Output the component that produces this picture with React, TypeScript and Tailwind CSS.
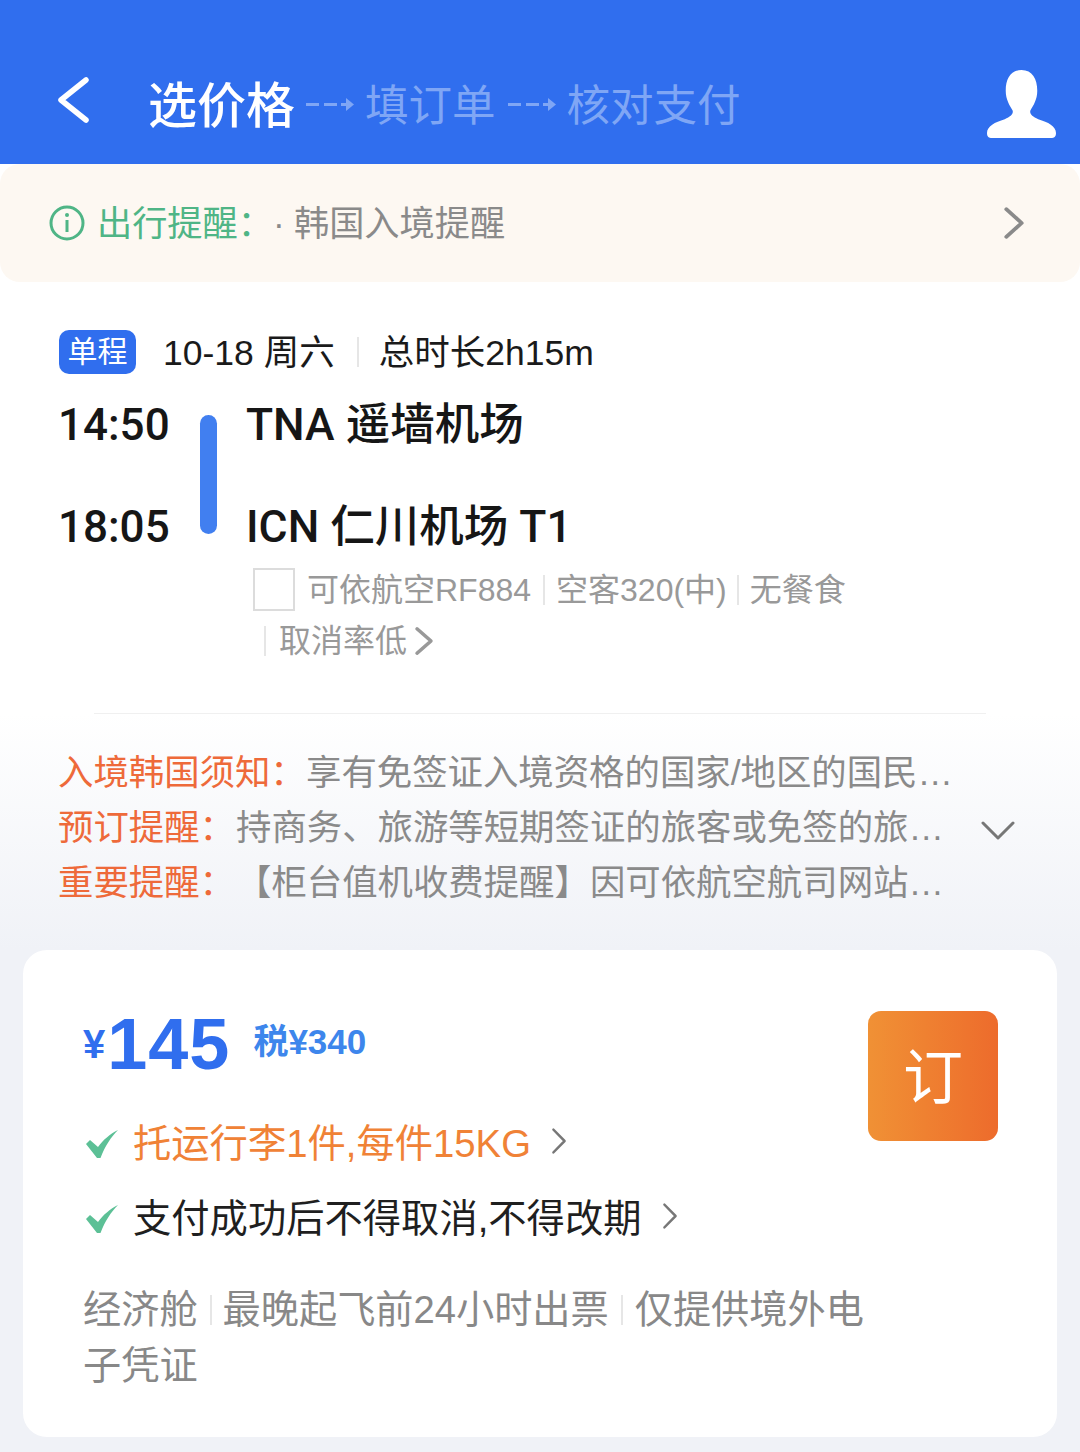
const Chevron = ({ className, width = 3 }: { className: string; width?: number }) => (
  <svg viewBox="0 0 20 32" className={className} fill="none" stroke="currentColor" strokeLinecap="round" strokeLinejoin="round" preserveAspectRatio="none">
    <path d="M3 3 L17 16 L3 29" strokeWidth={width} />
  </svg>
);

const DashArrow = () => (
  <svg viewBox="0 0 48 14" className="w-[48px] h-[14px] shrink-0 text-[#7fa6f5]" fill="currentColor">
    <rect x="0" y="6" width="13" height="3" />
    <rect x="18" y="6" width="13" height="3" />
    <rect x="35" y="6" width="5" height="3" />
    <path d="M40 1 L48 7.5 L40 14 Z" />
  </svg>
);

const Check = () => (
  <svg viewBox="0 0 32 28" className="w-[32px] h-[28px] shrink-0 text-[#5cc096]" fill="currentColor">
    <path d="M0 14 L4 10 L12 17 C17 10 24 4 32 0 C25 7 19 16 14.500 28 L11 28 Z" />
  </svg>
);

const Sep = ({ className }: { className: string }) => <span className={`inline-block w-[2px] bg-[#e6e6e6] shrink-0 ${className}`} />;

const NOTICES = [
  { label: '入境韩国须知：', text: '享有免签证入境资格的国家/地区的国民…', indent: 'w-[248px]' },
  { label: '预订提醒：', text: '持商务、旅游等短期签证的旅客或免签的旅…', indent: 'w-[178px]' },
  { label: '重要提醒：', text: '【柜台值机收费提醒】因可依航空航司网站…', indent: 'w-[178px]' },
];

export default function App() {
  return (
    <div className="w-[1080px] h-[1452px] overflow-hidden bg-white font-['Liberation_Sans','Noto_Sans_CJK_SC',sans-serif]">
      {/* header */}
      <div className="h-[164px] bg-[#306eee] flex items-center pl-[57px] pr-[24px] pt-[44px] relative">
        <svg viewBox="0 0 32 46" className="w-[32px] h-[46px] text-white shrink-0 -mt-[9px]" fill="none" stroke="currentColor" strokeLinecap="round" strokeLinejoin="round">
          <path d="M29 3 L4 23 L29 43" strokeWidth="5.500" />
        </svg>
        <span className="ml-[59px] text-[49px] leading-none font-medium text-white pt-[4px]">选价格</span>
        <span className="ml-[11px]"><DashArrow /></span>
        <span className="ml-[11px] text-[43.500px] leading-none text-[#7fa6f5] pt-[5px]">填订单</span>
        <span className="ml-[12px]"><DashArrow /></span>
        <span className="ml-[11px] text-[43.500px] leading-none text-[#7fa6f5] pt-[5px]">核对支付</span>
        <svg viewBox="0 0 70 70" className="w-[69px] h-[69px] ml-auto text-white mt-[1px]" fill="currentColor">
          <path d="M35 0 C46 0 51 9 51 21 C51 30 47 36 44 41 C43 45 46 47 52 50 C62 53 70 57 70 64 C70 68 68 69 65 69 L5 69 C2 69 0 68 0 64 C0 57 8 53 18 50 C24 47 27 45 26 41 C23 36 19 30 19 21 C19 9 24 0 35 0 Z" />
        </svg>
      </div>

      {/* travel notice */}
      <div className="h-[118px] bg-[#fdf8f2] rounded-[20px] flex items-center pl-[49px] pr-[55px]">
        <svg viewBox="0 0 36 36" className="w-[36px] h-[36px] shrink-0 text-[#4fb586]" fill="none" stroke="currentColor">
          <circle cx="18" cy="18" r="16" strokeWidth="3" />
          <path d="M18 15 V27" strokeWidth="3" />
          <circle cx="18" cy="10" r="2" fill="currentColor" stroke="none" />
        </svg>
        <span className="ml-[12px] pt-[2px] text-[35.200px] leading-none text-[#4fb586] w-[176px] shrink-0">出行提醒：</span>
        <span className="pt-[2px] text-[35.200px] leading-none text-[#8a8a8a] w-[21px] shrink-0">·</span>
        <span className="pt-[2px] text-[35.200px] leading-none text-[#8a8a8a]">韩国入境提醒</span>
        <Chevron className="w-[22px] h-[34px] ml-auto text-[#8a8a8a]" width={3.500} />
      </div>

      {/* flight */}
      <div className="h-[431px] pl-[59px] pt-[48px]">
        <div className="flex items-center h-[44px]">
          <span className="w-[77px] h-[44px] rounded-[10px] bg-[#306eee] text-white text-[30px] leading-none flex items-center justify-center">单程</span>
          <span className="ml-[27px] pt-[3px] text-[35.500px] leading-none text-[#1a1a1a]">10-18 周六</span>
          <Sep className="h-[30px] ml-[22px]" />
          <span className="ml-[20px] pt-[3px] text-[35.500px] leading-none text-[#1a1a1a]">总时长2h15m</span>
        </div>
        <div className="flex mt-[26px] h-[150px] font-['Roboto','Noto_Sans_CJK_SC',sans-serif]">
          <div className="w-[141px] shrink-0 flex flex-col text-[44px] leading-[50px] font-medium text-[#161616] -ml-[1px] mr-[1px]">
            <span>14:50</span>
            <span className="mt-[52px]">18:05</span>
          </div>
          <div className="w-[17px] h-[119px] mt-[15px] rounded-full bg-[#417ff0] shrink-0" />
          <div className="ml-[29px] flex flex-col text-[44.500px] leading-[50px] font-medium text-[#161616]">
            <span>TNA 遥墙机场</span>
            <span className="mt-[52px]">ICN 仁川机场 T1</span>
          </div>
        </div>
        <div className="ml-[194px] mt-[18px] text-[32px] leading-none text-[#999999]">
          <div className="flex items-center h-[43px]">
            <span className="w-[42px] h-[43px] border-2 border-[#dcdcdc] shrink-0" />
            <span className="ml-[12px]">可依航空RF884</span>
            <Sep className="h-[30px] ml-[12px]" />
            <span className="ml-[11px]">空客320(中)</span>
            <Sep className="h-[30px] ml-[10px]" />
            <span className="ml-[11px]">无餐食</span>
          </div>
          <div className="flex items-center h-[36px] mt-[12px] pl-[11px]">
            <Sep className="h-[30px]" />
            <span className="ml-[13px]">取消率低</span>
            <Chevron className="w-[20px] h-[30px] ml-[7px] text-[#999999]" width={3.500} />
          </div>
        </div>
      </div>

      {/* tips */}
      <div className="h-[237px] bg-gradient-to-b from-white to-[#f0f2f7] relative">
        <div className="mx-[94px] h-[1px] bg-[#f0f0f0]" />
        <div className="pl-[58px] pt-[42px] flex flex-col gap-[20px]">
          {NOTICES.map((n) => (
            <div key={n.label} className="flex items-center h-[35px] text-[35.400px] leading-none">
              <span className={`${n.indent} shrink-0 text-[#ee6a3a]`}>{n.label}</span>
              <span className="text-[#8a8a8a] whitespace-nowrap">{n.text}</span>
            </div>
          ))}
        </div>
        <svg viewBox="0 0 34 20" className="absolute left-[981px] top-[108px] w-[34px] h-[20px] text-[#777777]" fill="none" stroke="currentColor" strokeLinecap="round" strokeLinejoin="round">
          <path d="M2 2 L17 17 L32 2" strokeWidth="3" />
        </svg>
      </div>

      {/* price card */}
      <div className="bg-[#f0f2f7] h-[502px] px-[23px]">
        <div className="h-[487px] bg-white rounded-[24px] pl-[60px] pr-[59px] pt-[61px]">
          <div className="flex justify-between h-[130px]">
            <div className="flex items-center h-[66px] text-[#306eee] font-bold">
              <span className="text-[40px] leading-none">¥</span>
              <span className="ml-[2px] text-[72px] leading-none tracking-[1px]">145</span>
              <span className="ml-[23px] text-[35px] leading-none font-bold text-[#3d86ec] -mt-[5px]">税¥340</span>
            </div>
            <div className="w-[130px] h-[130px] pt-[5px] rounded-[13px] bg-gradient-to-r from-[#f09135] to-[#ed6b2c] text-white text-[60px] leading-none flex items-center justify-center">订</div>
          </div>
          <div className="-mt-[16px] pl-[3px] flex items-center h-[38px] text-[38.300px] leading-none text-[#f08236]">
            <Check />
            <span className="ml-[15px]">托运行李1件,每件15KG</span>
            <Chevron className="w-[16px] h-[28px] ml-[20px] text-[#777777] -mt-[6px]" />
          </div>
          <div className="mt-[37px] pl-[3px] flex items-center h-[38px] text-[38.300px] leading-none text-[#1f1f1f]">
            <Check />
            <span className="ml-[15px]">支付成功后不得取消,不得改期</span>
            <Chevron className="w-[16px] h-[28px] ml-[20px] text-[#777777] -mt-[6px]" />
          </div>
          <div className="mt-[44px] w-[800px] text-[38.200px] leading-[56px] text-[#888888]">
            <div className="flex items-center">
              <span>经济舱</span>
              <Sep className="h-[30px] ml-[12px]" />
              <span className="ml-[11px]">最晚起飞前24小时出票</span>
              <Sep className="h-[30px] ml-[12px]" />
              <span className="ml-[12px]">仅提供境外电</span>
            </div>
            <div>子凭证</div>
          </div>
        </div>
      </div>
    </div>
  );
}
